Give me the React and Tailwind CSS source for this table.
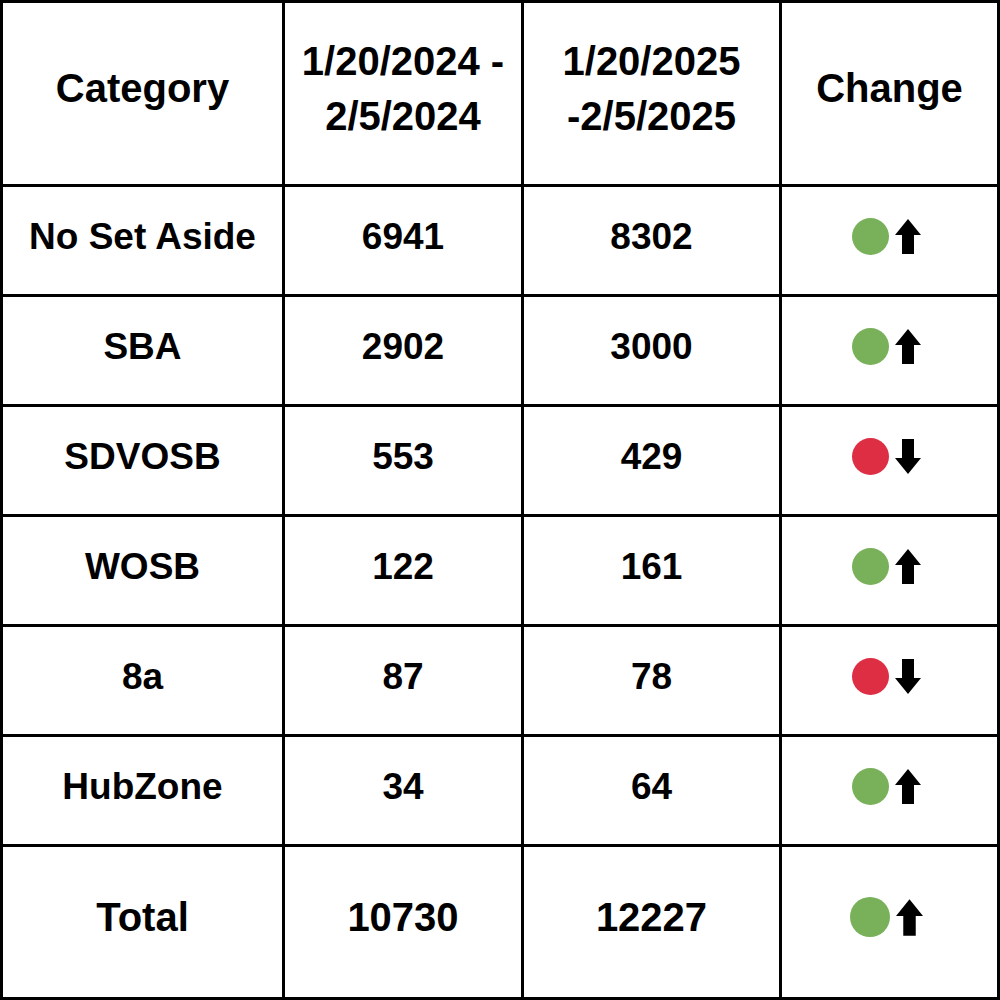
const rows = [
  { cat: 'No Set Aside', a: '6941', b: '8302', up: true },
  { cat: 'SBA', a: '2902', b: '3000', up: true },
  { cat: 'SDVOSB', a: '553', b: '429', up: false },
  { cat: 'WOSB', a: '122', b: '161', up: true },
  { cat: '8a', a: '87', b: '78', up: false },
  { cat: 'HubZone', a: '34', b: '64', up: true },
];

function Arrow({ up, big }) {
  return (
    <svg
      viewBox="0 0 26 35"
      className={big ? 'w-[27px] h-[37px]' : 'w-[26px] h-[35px]'}
      style={up ? undefined : { transform: 'scaleY(-1)' }}
    >
      <path d="M13 0 L0 16 L7 16 L7 35 L19 35 L19 16 L26 16 Z" fill="#000" />
    </svg>
  );
}

function Change({ up, big }) {
  return (
    <div className="flex items-center gap-[6px] ml-[-6px]">
      <div
        className={`rounded-full ${big ? 'w-[40px] h-[40px]' : 'w-[37px] h-[37px]'} ${
          up ? 'bg-[#78b159]' : 'bg-[#dd2e44]'
        }`}
      />
      <Arrow up={up} big={big} />
    </div>
  );
}

function Cell({ children, big }) {
  return (
    <div
      className={`bg-white flex items-center justify-center text-center ${
        big ? 'text-[40px] pb-[10px]' : 'text-[37px] pb-[9px]'
      }`}
    >
      {children}
    </div>
  );
}

export default function App() {
  return (
    <div
      className="w-[1000px] h-[1000px] bg-black p-[3px] grid gap-[3px] grid-cols-[279px_236px_255px_215px] grid-rows-[181px_repeat(6,107px)_150px] text-black font-bold leading-[55px]"
      style={{ fontFamily: '"Liberation Sans", Arial, sans-serif' }}
    >
      <Cell big>Category</Cell>
      <Cell big>
        <div>
          1/20/2024 -<br />2/5/2024
        </div>
      </Cell>
      <Cell big>
        <div>
          1/20/2025
          <br />
          -2/5/2025
        </div>
      </Cell>
      <Cell big>Change</Cell>

      {rows.map((r) => (
        <>
          <Cell key={r.cat + 'c'}>{r.cat}</Cell>
          <Cell key={r.cat + 'a'}>{r.a}</Cell>
          <Cell key={r.cat + 'b'}>{r.b}</Cell>
          <Cell key={r.cat + 'd'}>
            <Change up={r.up} />
          </Cell>
        </>
      ))}

      <Cell big>Total</Cell>
      <Cell big>10730</Cell>
      <Cell big>12227</Cell>
      <Cell big>
        <Change up big />
      </Cell>
    </div>
  );
}
